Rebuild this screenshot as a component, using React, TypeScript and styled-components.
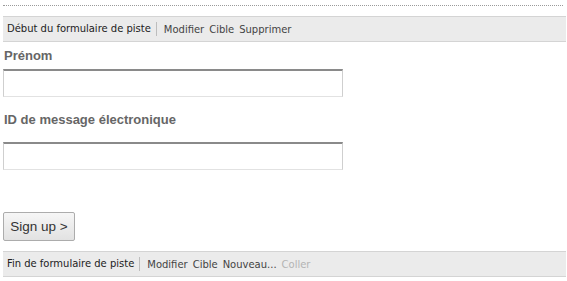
import React from "react";
import styled, { createGlobalStyle } from "styled-components";

const Global = createGlobalStyle`
  body {
    margin: 0;
    background: #fff;
    font-family: "Liberation Sans", Arial, sans-serif;
  }
`;

const Styled = {
  Page: styled.div`
    width: 567px;
    height: 281px;
    padding: 5px 1px 0 3px;
    box-sizing: border-box;
    overflow: hidden;
  `,
  Dotted: styled.div`
    width: 560px;
    border-top: 1px dotted #9a9a9a;
    margin-bottom: 10px;
  `,
  Bar: styled.div`
    height: 26px;
    display: flex;
    align-items: center;
    background: #ebebeb;
    border-top: 1px solid #d4d4d4;
    border-bottom: 1px solid #d4d4d4;
    box-sizing: border-box;
    padding-left: 4px;
    font-family: "DejaVu Sans Condensed", "DejaVu Sans", sans-serif;
    font-size: 11.1px;
    color: #222;
  `,
  Title: styled.span`
    padding-right: 5px;
    margin-right: 7px;
    border-right: 1px solid #bdbdbd;
    line-height: 14px;
  `,
  Action: styled.span<{ $disabled?: boolean }>`
    margin-right: 5px;
    color: ${(p) => (p.$disabled ? "#b4b4b4" : "#444")};
  `,
  Form: styled.div`
    padding-top: 6px;
    display: flex;
    flex-direction: column;
  `,
  Label: styled.label<{ $top?: number; $bottom?: number }>`
    font-size: 13px;
    font-weight: bold;
    color: #666;
    line-height: 15px;
    margin: ${(p) => `${p.$top ?? 0}px 0 ${p.$bottom ?? 0}px 1px`};
  `,
  Input: styled.input`
    width: 340px;
    height: 28px;
    box-sizing: border-box;
    border: 1px solid #cfcfcf;
    border-top: 2px solid #8a8a8a;
    border-bottom-color: #e2e2e2;
    background: #fff;
  `,
  Spacer: styled.div<{ $h: number }>`
    height: ${(p) => p.$h}px;
  `,
  Button: styled.button`
    align-self: flex-start;
    height: 29px;
    width: 72px;
    padding: 0;
    font-family: "Liberation Sans", Arial, sans-serif;
    font-size: 13.5px;
    color: #333;
    background: linear-gradient(#f6f6f6, #e2e2e2);
    border: 1px solid #acacac;
    border-radius: 2px;
  `,
};

const Toolbar = ({ title, actions }: { title: string; actions: { label: string; disabled?: boolean }[] }) => (
  <Styled.Bar>
    <Styled.Title>{title}</Styled.Title>
    {actions.map((a) => (
      <Styled.Action key={a.label} $disabled={a.disabled}>
        {a.label}
      </Styled.Action>
    ))}
  </Styled.Bar>
);

const App = () => {
  return (
    <Styled.Page>
      <Global />
      <Styled.Dotted />
      <Toolbar
        title="Début du formulaire de piste"
        actions={[{ label: "Modifier" }, { label: "Cible" }, { label: "Supprimer" }]}
      />
      <Styled.Form>
        <Styled.Label $bottom={6}>Prénom</Styled.Label>
        <Styled.Input />
        <Styled.Label $top={15} $bottom={15}>ID de message électronique</Styled.Label>
        <Styled.Input />
        <Styled.Spacer $h={42} />
        <Styled.Button>Sign up &gt;</Styled.Button>
        <Styled.Spacer $h={10} />
      </Styled.Form>
      <Toolbar
        title="Fin de formulaire de piste"
        actions={[{ label: "Modifier" }, { label: "Cible" }, { label: "Nouveau..." }, { label: "Coller", disabled: true }]}
      />
    </Styled.Page>
  );
};

export default App;
